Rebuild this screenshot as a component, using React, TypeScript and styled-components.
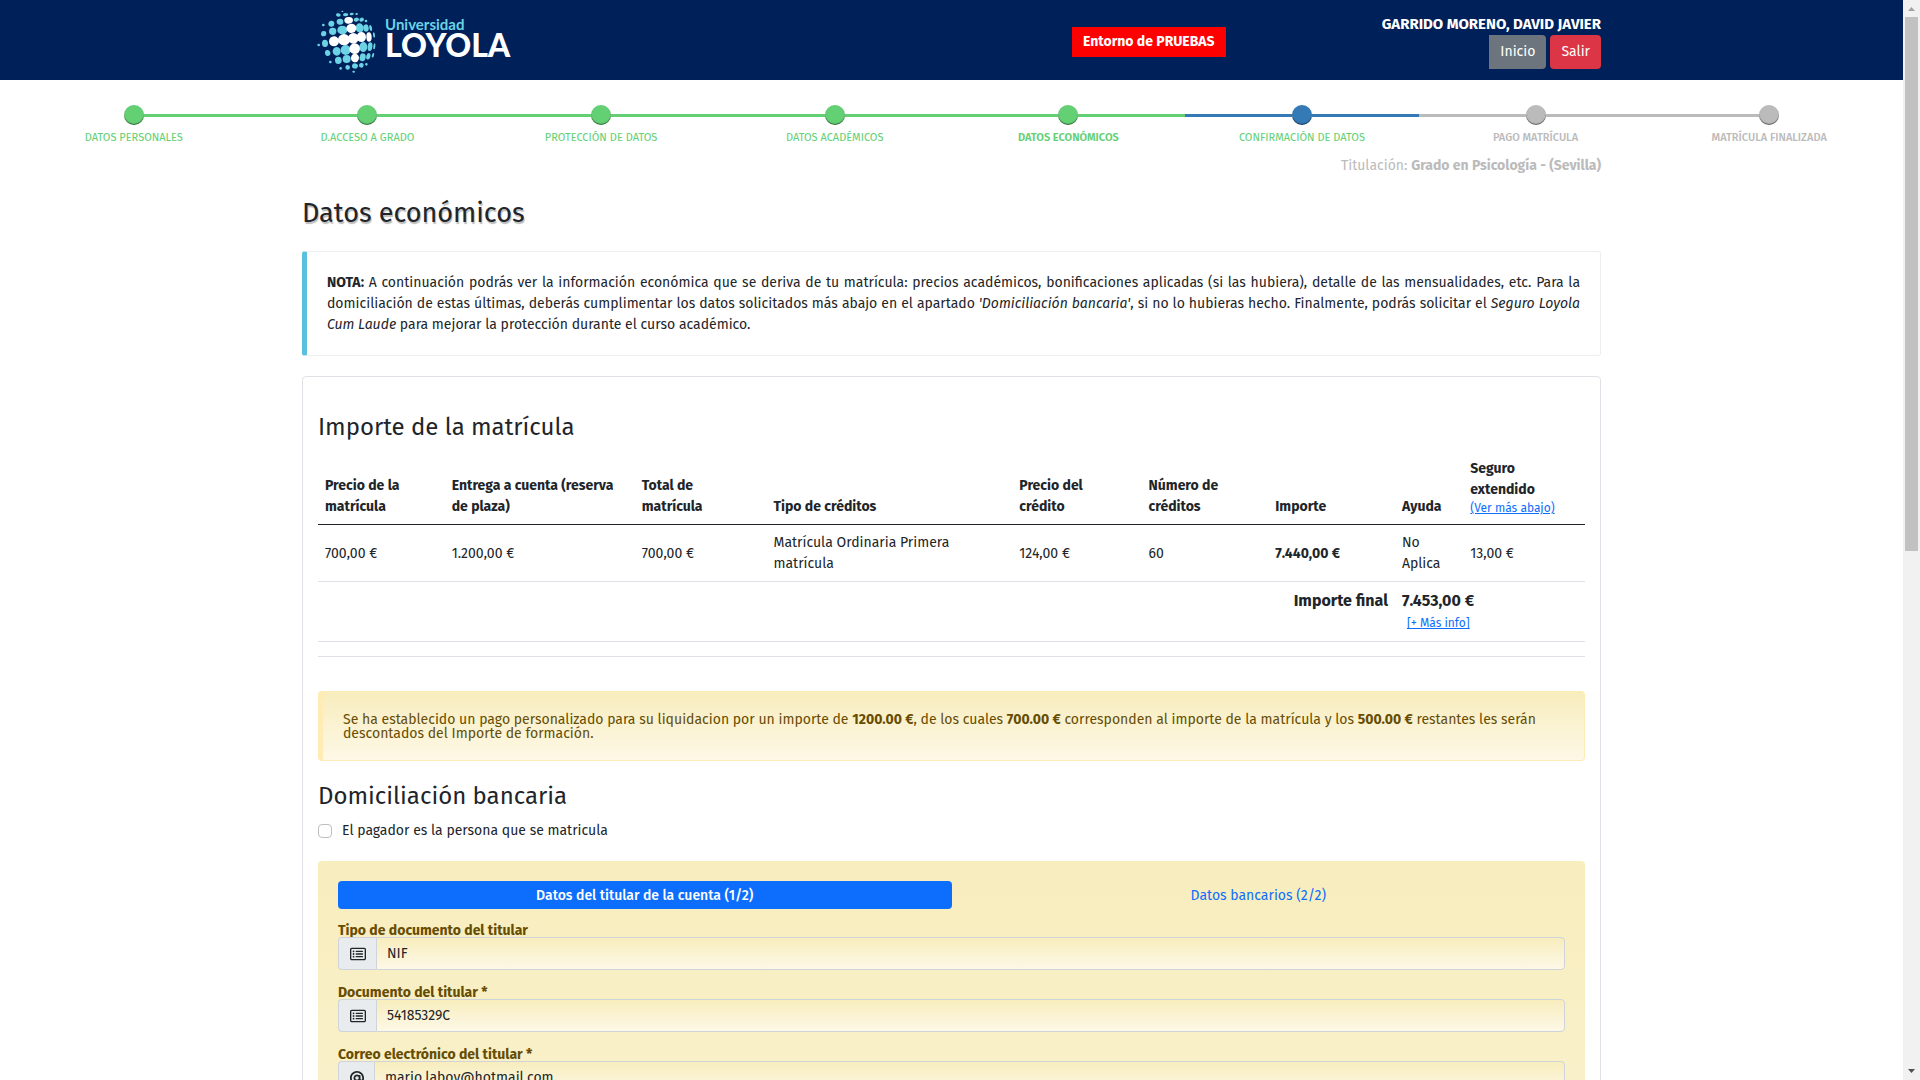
import React from 'react';
import styled, { createGlobalStyle, css } from 'styled-components';
import { FaAt, FaRegRectangleList } from 'react-icons/fa6';

const font = '"Trebuchet MS", "Fira Sans", Lato, "Open Sans", sans-serif';
const ink = '#212529';
const green = '#64d074';
const blue = '#337ab7';
const gray = '#bbbbbb';
const warnGradient = 'linear-gradient(#f8edbd, #fdf8e7)';

const GlobalStyle = createGlobalStyle`
  *, *::before, *::after { box-sizing: border-box; }
  body { margin: 0; background: #fff; }
  button, input { font: inherit; }
`;

const Shell = styled.div`
  display: grid;
  grid-template-columns: minmax(0, 1fr) 17px;
  height: 100vh;
  overflow: hidden;
  font: 14px/21px ${font};
  color: ${ink};
`;

const Page = styled.div`
  min-width: 0;
  overflow: hidden;
`;

const Container = styled.div`
  max-width: 1299px;
  margin: 0 auto;
`;

const Header = styled.header`
  background: #002059;
`;

const HeaderInner = styled(Container)`
  display: grid;
  grid-template-columns: 755px auto 1fr;
  align-items: center;
  height: 80px;
  padding-left: 15px;
`;

const Brand = styled.a`
  display: flex;
  align-items: center;
  gap: 4px;
  color: #fff;
  text-decoration: none;
`;

const BrandName = styled.span`
  display: flex;
  flex-direction: column;
  font-family: Lato, sans-serif;
  font-weight: 900;
  font-size: 32px;
  line-height: 26px;
  padding-bottom: 7px;
`;

const BrandTop = styled.span`
  font-weight: 700;
  font-size: 15px;
  line-height: 16px;
  color: #6cd3e6;
`;

const EnvBadge = styled.strong`
  background: #ff0000;
  color: #fff;
  padding: 4px 11px 5px;
  margin-top: 4px;
`;

const User = styled.div`
  display: flex;
  flex-direction: column;
  align-items: flex-end;
  color: #fff;
  font-size: 15px;
  margin-top: 2px;
`;

const UserButtons = styled.div`
  display: flex;
  gap: 4px;
`;

const HeaderButton = styled.button<{ $danger?: boolean }>`
  border: 0;
  color: #fff;
  height: 34px;
  padding: 0 11px;
  font-size: 14px;
  background: ${(p) => (p.$danger ? '#dc3545' : '#6c757d')};
  border-radius: ${(p) => (p.$danger ? '4px' : '0 4px 4px 0')};
`;

const Steps = styled.ol`
  list-style: none;
  display: flex;
  margin: 0;
  padding: 25px 17px 0;
`;

type StepState = 'done' | 'current' | 'todo';
const stepColor = { done: green, current: blue, todo: gray };

const Step = styled.li<{ $state: StepState; $bold?: boolean }>`
  flex: 1;
  display: grid;
  grid-template-columns: 1fr 20px 1fr;
  align-items: center;
  font-size: 11px;
  line-height: 16px;
  font-weight: ${(p) => (p.$bold ? 600 : p.$state === 'todo' ? 500 : 400)};
  color: ${(p) => (p.$state === 'todo' ? gray : green)};

  &::before,
  &::after {
    content: '';
    grid-row: 1;
    height: 3px;
    background: ${(p) => stepColor[p.$state]};
  }
  &::before { grid-column: 1; }
  &::after { grid-column: 3; }
  &:first-child::before,
  &:last-child::after { background: transparent; }
`;

const Dot = styled.span<{ $state: StepState }>`
  grid-row: 1;
  grid-column: 2;
  height: 20px;
  border-radius: 50%;
  background: ${(p) => stepColor[p.$state]};
  box-shadow: inset 0 -1px 1px rgba(0, 0, 0, 0.5);
`;

const StepLabel = styled.span`
  grid-row: 2;
  grid-column: 1 / -1;
  margin-top: 5px;
  text-align: center;
`;

const Degree = styled.p`
  margin: 9px 0 20px;
  text-align: right;
  color: ${gray};
`;

const Title = styled.h1`
  margin: 0 0 21px;
  font-size: 27px;
  line-height: 34px;
  font-weight: 400;
  text-shadow: 1px 2px 1px #bbb;
`;

const Note = styled.section`
  border: 1px solid #eee;
  border-left: 5px solid #5bc0de;
  border-radius: 3px;
  padding: 20px;
  text-align: justify;
  margin-bottom: 20px;
`;

const Card = styled.main`
  border: 1px solid #dee2e6;
  border-radius: 4px;
  padding: 35px 15px 15px;
`;

const SubTitle = styled.h2`
  margin: 0;
  font-size: 24px;
  line-height: 30px;
  font-weight: 400;
`;

const Table = styled.table`
  width: 100%;
  margin: 9px 0 34px;
  table-layout: fixed;
  border-collapse: separate;
  border-spacing: 0;
`;

const Col = styled.col<{ $w: number }>`
  width: ${(p) => p.$w}%;
`;

const cell = css`
  padding: 7px;
  text-align: left;
`;

const Th = styled.th`
  ${cell}
  vertical-align: bottom;
  border-bottom: 1px solid ${ink};
`;

const Td = styled.td<{ $strong?: boolean }>`
  ${cell}
  vertical-align: middle;
  border-bottom: 1px solid #dee2e6;
  font-weight: ${(p) => (p.$strong ? 700 : 400)};
`;

const TotalCell = styled(Td)<{ $right?: boolean }>`
  vertical-align: top;
  font-weight: 700;
  font-size: 16px;
  line-height: 24px;
  text-align: ${(p) => (p.$right ? 'right' : 'left')};
`;

const SmallLink = styled.a<{ $indent?: boolean }>`
  display: block;
  font-size: 12px;
  line-height: ${(p) => (p.$indent ? '21px' : '17px')};
  font-weight: 400;
  color: #0d6efd;
  text-decoration: underline;
  padding-left: ${(p) => (p.$indent ? '5px' : '0')};
`;

const Alert = styled.div`
  border: 1px solid #ffecb5;
  border-left-width: 5px;
  border-radius: 4px;
  background: ${warnGradient};
  color: #664d03;
  line-height: 14px;
  padding: 21px 20px 19px;
  margin-bottom: 20px;
`;

const Check = styled.label`
  display: flex;
  align-items: center;
  gap: 10px;
  margin: 9px 0 20px;
`;

const CheckBox = styled.input`
  appearance: none;
  width: 14px;
  height: 14px;
  margin: 0;
  border: 1px solid #bfbfbf;
  border-radius: 4px;
  background: #fff;
`;

const Panel = styled.form`
  min-height: 730px;
  padding: 20px;
  border-radius: 4px;
  background: ${warnGradient};
  color: #664d03;
`;

const Tabs = styled.div`
  display: grid;
  grid-template-columns: 1fr 1fr;
  margin-bottom: 14px;
`;

const Tab = styled.button<{ $active?: boolean }>`
  border: 0;
  border-radius: 4px;
  height: 28px;
  background: ${(p) => (p.$active ? '#0d6efd' : 'transparent')};
  color: ${(p) => (p.$active ? '#fff' : '#0d6efd')};
  font-weight: ${(p) => (p.$active ? 500 : 400)};
`;

const Field = styled.div`
  display: grid;
  grid-template-columns: auto 1fr;
  margin-bottom: 15px;
`;

const FieldLabel = styled.label`
  grid-column: 1 / -1;
  height: 14px;
  font-weight: 700;
  line-height: 16px;
`;

const Addon = styled.span`
  display: flex;
  align-items: center;
  padding: 0 10px 0 11px;
  border: 1px solid #ced4da;
  border-right: 0;
  border-radius: 4px 0 0 4px;
  background: #e9ecef;
  color: ${ink};
`;

const Input = styled.input`
  width: 100%;
  height: 33px;
  padding: 0 10px;
  border: 1px solid #ced4da;
  border-radius: 0 4px 4px 0;
  background: ${warnGradient};
  color: ${ink};
`;

const ScrollTrack = styled.div`
  display: flex;
  flex-direction: column;
  align-items: center;
  justify-content: space-between;
  background: #f1f1f1;
`;

const ScrollThumb = styled.div`
  width: 13px;
  height: calc(50% - 6px);
  margin-bottom: auto;
  background: #c1c1c1;
`;

const ScrollArrow = styled.svg`
  width: 17px;
  height: 17px;
  flex: none;
`;

/* x, y, rx, ry */
const cyanDots = [
  [97, 19, 3, 2], [85, 30, 7, 5], [107, 29, 8, 5], [125, 27, 6, 4], [140, 27, 4, 3],
  [40, 60, 4, 4], [64, 56, 9, 9], [90, 50, 10, 9], [139, 44, 8, 6], [155, 44, 7, 6], [168, 48, 4, 4],
  [41, 86, 8, 8], [68, 79, 11, 11], [97, 75, 15, 13], [149, 69, 12, 14], [168, 69, 8, 11], [182, 69, 4, 9], [192, 90, 3, 8],
  [26, 120, 4, 4], [45, 115, 9, 11],
  [53, 144, 8, 9], [80, 139, 12, 13], [107, 135, 15, 15], [160, 126, 12, 15], [180, 125, 7, 13], [193, 124, 3, 9],
  [61, 171, 4, 4], [85, 166, 10, 11], [110, 162, 12, 12], [158, 157, 9, 12], [175, 154, 6, 10], [189, 151, 3, 7],
  [92, 190, 4, 4], [113, 187, 7, 7], [135, 183, 9, 8], [154, 181, 7, 7], [169, 178, 4, 4], [131, 200, 4, 3],
];
const whiteDots = [
  [116, 46, 13, 10], [124, 70, 15, 14], [72, 109, 15, 15], [102, 104, 18, 17], [130, 100, 16, 16],
  [154, 96, 14, 15], [177, 96, 8, 14], [134, 131, 16, 16], [135, 159, 12, 13],
];

function Globe() {
  const draw = (dots: number[][], fill: string) =>
    dots.map(([x, y, rx, ry]) => (
      <ellipse
        key={`${x}-${y}`}
        cx={x}
        cy={y}
        rx={rx}
        ry={ry}
        fill={fill}
        transform={`rotate(${Math.round(((x - 105) * (105 - y)) / -220)} ${x} ${y})`}
      />
    ));
  return (
    <svg width="64" height="72" viewBox="21 -3 192 216" aria-hidden="true">
      {draw(cyanDots, '#6cd3e6')}
      {draw(whiteDots, '#fff')}
    </svg>
  );
}

const steps: { label: string; state: StepState; bold?: boolean }[] = [
  { label: 'DATOS PERSONALES', state: 'done' },
  { label: 'D.ACCESO A GRADO', state: 'done' },
  { label: 'PROTECCIÓN DE DATOS', state: 'done' },
  { label: 'DATOS ACADÉMICOS', state: 'done' },
  { label: 'DATOS ECONÓMICOS', state: 'done', bold: true },
  { label: 'CONFIRMACIÓN DE DATOS', state: 'current' },
  { label: 'PAGO MATRÍCULA', state: 'todo' },
  { label: 'MATRÍCULA FINALIZADA', state: 'todo' },
];

const columns = [10, 15, 10.4, 19.4, 10.2, 10, 10, 5.4, 9.6];

const fields = [
  { id: 'tipo', label: 'Tipo de documento del titular', value: 'NIF', icon: 'list' },
  { id: 'documento', label: 'Documento del titular *', value: '54185329C', icon: 'list' },
  { id: 'correo', label: 'Correo electrónico del titular *', value: 'mario.laboy@hotmail.com', icon: 'at' },
];

export default function App() {
  return (
    <>
      <GlobalStyle />
      <Shell>
        <Page>
          <Header>
            <HeaderInner>
              <Brand href="#">
                <Globe />
                <BrandName>
                  <BrandTop>Universidad</BrandTop>
                  LOYOLA
                </BrandName>
              </Brand>
              <EnvBadge>Entorno de PRUEBAS</EnvBadge>
              <User>
                <strong>GARRIDO MORENO, DAVID JAVIER</strong>
                <UserButtons>
                  <HeaderButton type="button">Inicio</HeaderButton>
                  <HeaderButton type="button" $danger>Salir</HeaderButton>
                </UserButtons>
              </User>
            </HeaderInner>
          </Header>

          <Steps>
            {steps.map((s) => (
              <Step key={s.label} $state={s.state} $bold={s.bold}>
                <Dot $state={s.state} />
                <StepLabel>{s.label}</StepLabel>
              </Step>
            ))}
          </Steps>

          <Container>
            <Degree>
              Titulación: <strong>Grado en Psicología - (Sevilla)</strong>
            </Degree>
            <Title>Datos económicos</Title>

            <Note>
              <strong>NOTA:</strong> A continuación podrás ver la información económica que se deriva de tu
              matrícula: precios académicos, bonificaciones aplicadas (si las hubiera), detalle de las
              mensualidades, etc. Para la domiciliación de estas últimas, deberás cumplimentar los datos
              solicitados más abajo en el apartado <em>'Domiciliación bancaria'</em>, si no lo hubieras hecho.
              Finalmente, podrás solicitar el <em>Seguro Loyola Cum Laude</em> para mejorar la protección
              durante el curso académico.
            </Note>

            <Card>
              <SubTitle>Importe de la matrícula</SubTitle>
              <Table>
                <colgroup>
                  {columns.map((w, i) => (
                    <Col key={i} $w={w} />
                  ))}
                </colgroup>
                <thead>
                  <tr>
                    <Th>Precio de la matrícula</Th>
                    <Th>Entrega a cuenta (reserva de plaza)</Th>
                    <Th>Total de<br />matrícula</Th>
                    <Th>Tipo de créditos</Th>
                    <Th>Precio del<br />crédito</Th>
                    <Th>Número de<br />créditos</Th>
                    <Th>Importe</Th>
                    <Th>Ayuda</Th>
                    <Th>
                      Seguro extendido
                      <SmallLink href="#seguro">(Ver más abajo)</SmallLink>
                    </Th>
                  </tr>
                </thead>
                <tbody>
                  <tr>
                    <Td>700,00 €</Td>
                    <Td>1.200,00 €</Td>
                    <Td>700,00 €</Td>
                    <Td>Matrícula Ordinaria Primera matrícula</Td>
                    <Td>124,00 €</Td>
                    <Td>60</Td>
                    <Td $strong>7.440,00 €</Td>
                    <Td>No Aplica</Td>
                    <Td>13,00 €</Td>
                  </tr>
                  <tr>
                    <TotalCell colSpan={7} $right>Importe final</TotalCell>
                    <TotalCell colSpan={2}>
                      7.453,00 €
                      <SmallLink href="#info" $indent>[+ Más info]</SmallLink>
                    </TotalCell>
                  </tr>
                  <tr>
                    <Td colSpan={9} />
                  </tr>
                </tbody>
              </Table>

              <Alert role="alert">
                Se ha establecido un pago personalizado para su liquidacion por un importe de{' '}
                <strong>1200.00 €</strong>, de los cuales <strong>700.00 €</strong> corresponden al importe de
                la matrícula y los <strong>500.00 €</strong> restantes les serán descontados del Importe de
                formación.
              </Alert>

              <SubTitle>Domiciliación bancaria</SubTitle>
              <Check>
                <CheckBox type="checkbox" />
                El pagador es la persona que se matricula
              </Check>

              <Panel>
                <Tabs>
                  <Tab type="button" $active>Datos del titular de la cuenta (1/2)</Tab>
                  <Tab type="button">Datos bancarios (2/2)</Tab>
                </Tabs>
                {fields.map((f) => (
                  <Field key={f.id}>
                    <FieldLabel htmlFor={f.id}>{f.label}</FieldLabel>
                    <Addon>
                      {f.icon === 'list' ? <FaRegRectangleList size={16} /> : <FaAt size={14} />}
                    </Addon>
                    <Input id={f.id} defaultValue={f.value} />
                  </Field>
                ))}
              </Panel>
            </Card>
          </Container>
        </Page>

        <ScrollTrack aria-hidden="true">
          <ScrollArrow viewBox="0 0 17 17">
            <path d="M5 11h7L8.500 7z" fill="#a3a3a3" />
          </ScrollArrow>
          <ScrollThumb />
          <ScrollArrow viewBox="0 0 17 17">
            <path d="M5 6h7l-3.500 4z" fill="#505050" />
          </ScrollArrow>
        </ScrollTrack>
      </Shell>
    </>
  );
}
